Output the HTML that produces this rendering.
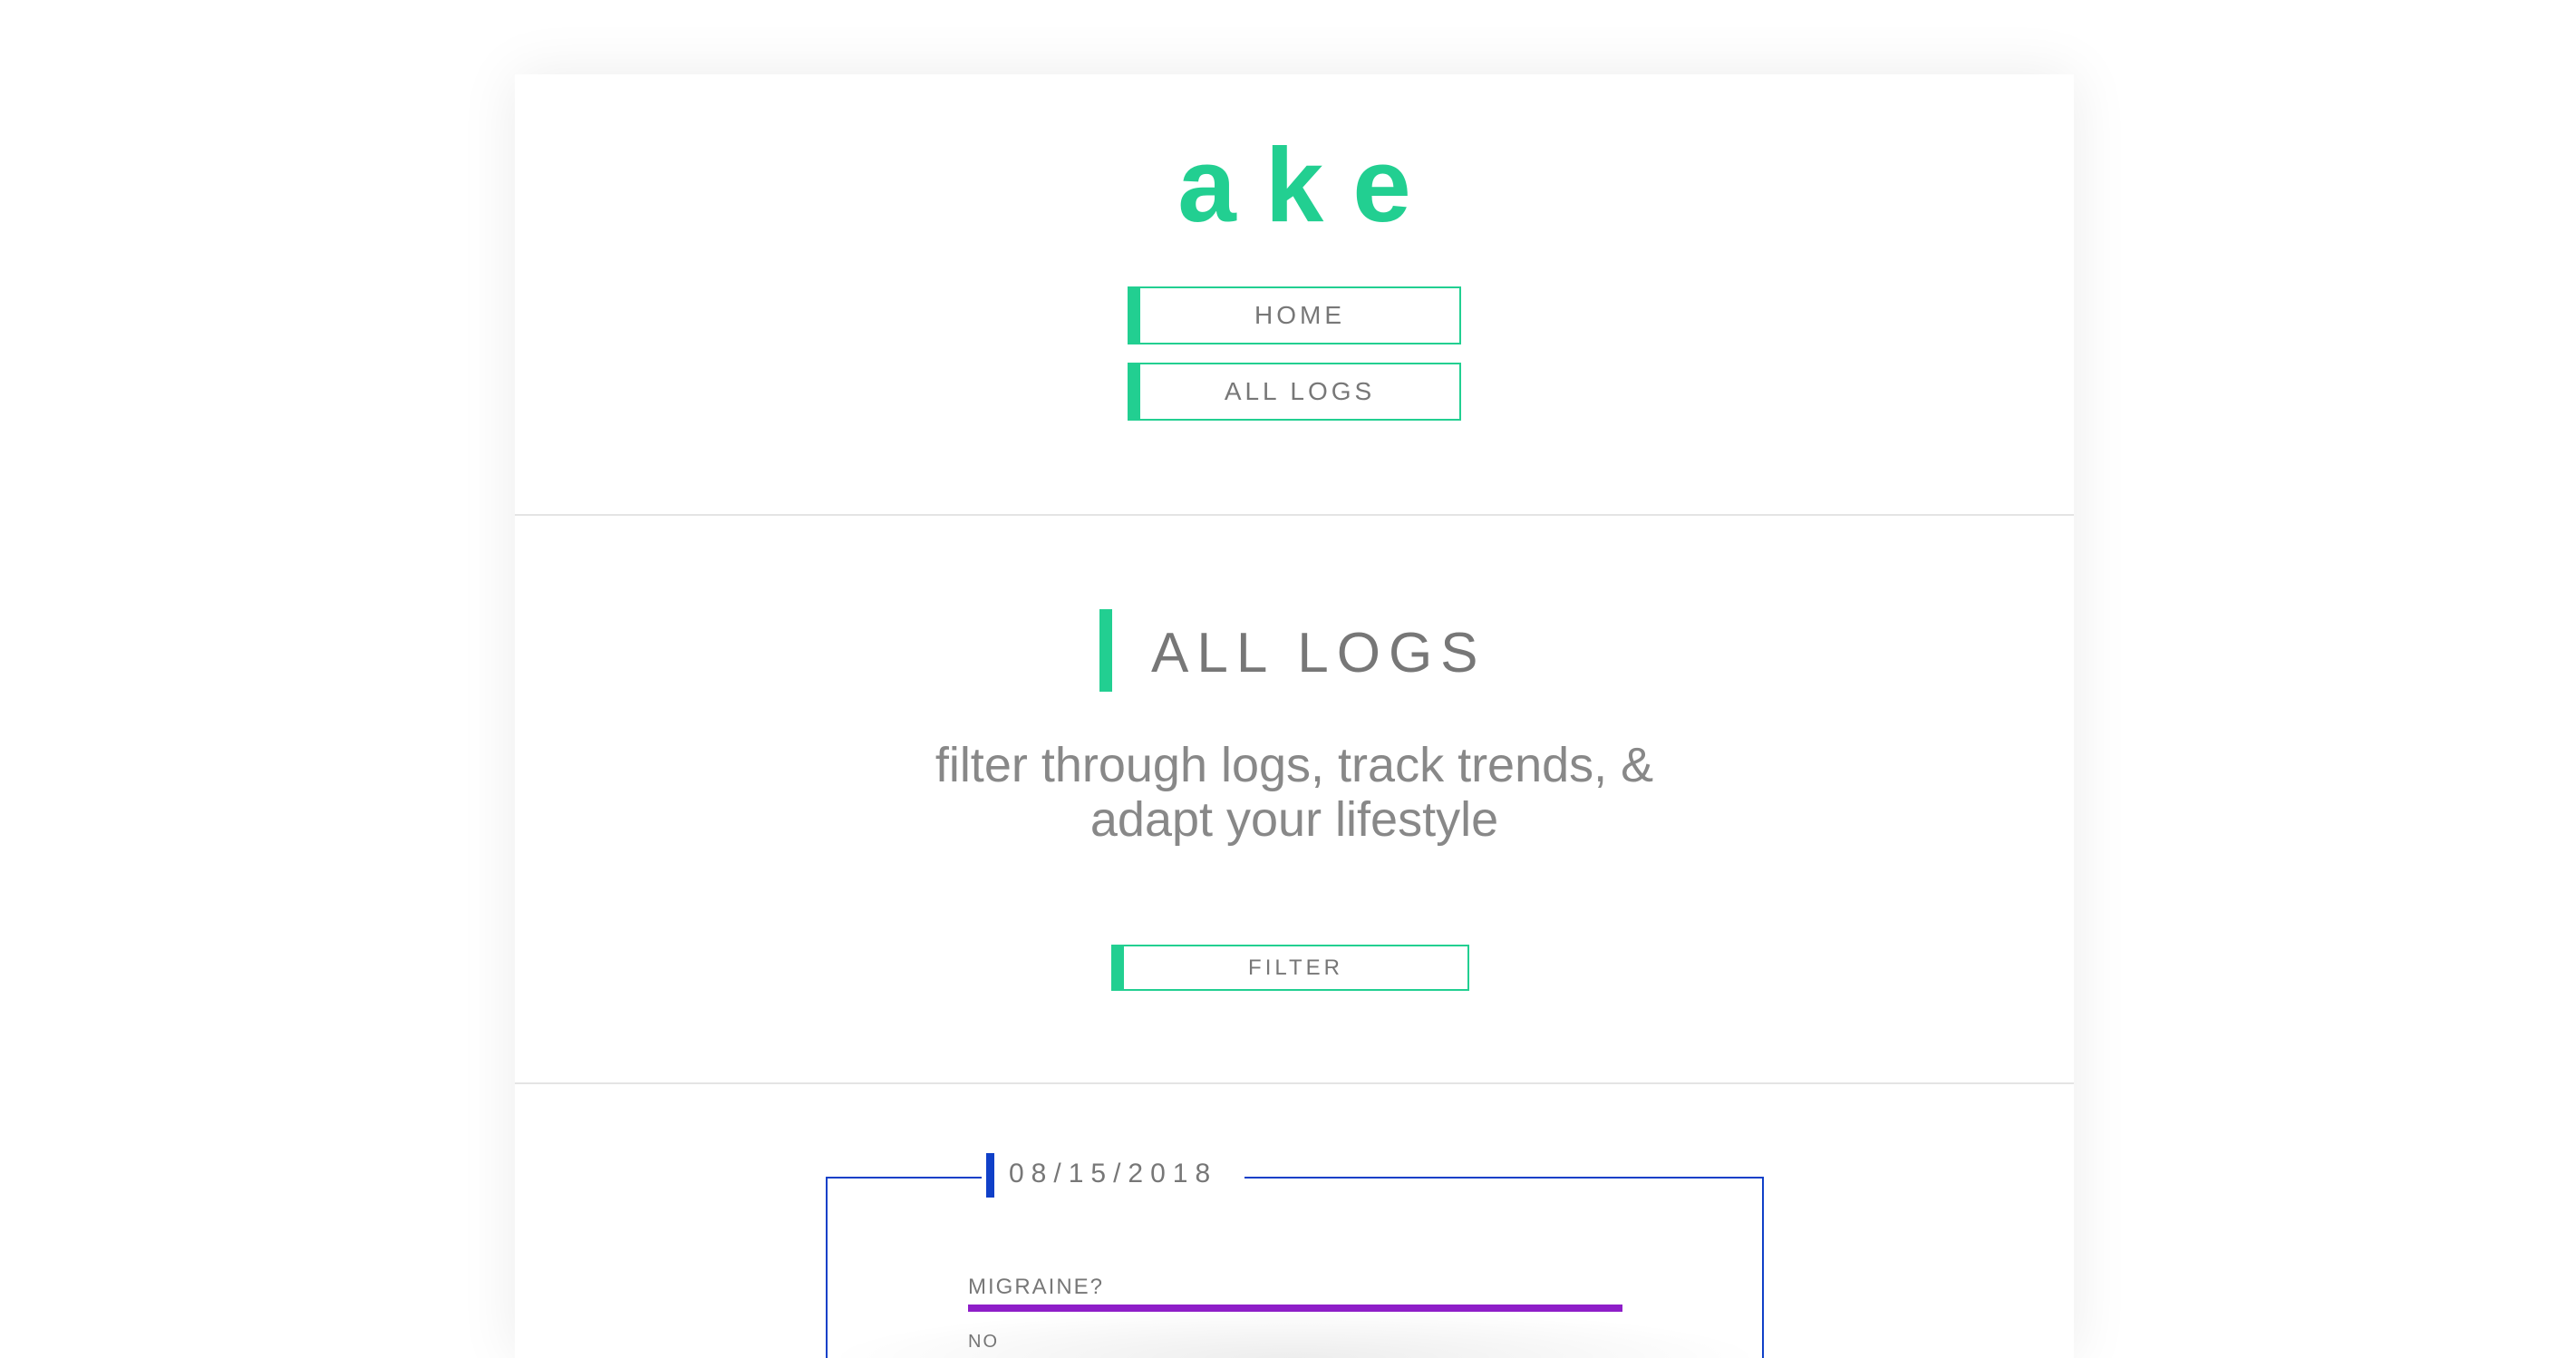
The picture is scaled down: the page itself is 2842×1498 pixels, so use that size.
<!DOCTYPE html>
<html><head><meta charset="utf-8"><style>
html,body{margin:0;padding:0;background:#fff;width:2842px;height:1498px;overflow:hidden;font-family:"Liberation Sans",sans-serif;}
.wrap{position:relative;width:2842px;height:1498px;overflow:hidden;}
.card{position:absolute;left:568px;top:82px;width:1720px;height:1416px;background:#fff;box-shadow:0 0 60px rgba(0,0,0,0.08);overflow:hidden;}
.abs{position:absolute;}
.logo{left:0;width:1720px;text-align:center;color:#22cf91;font-size:116px;font-weight:bold;letter-spacing:32px;line-height:1;padding-left:32px;box-sizing:border-box;}
.btn{position:absolute;border:2px solid #22cf91;border-left:14px solid #22cf91;box-sizing:border-box;color:#777;text-align:center;}
.hr{position:absolute;left:0;width:1720px;height:2px;background:#e4e4e4;}
</style></head><body><div class="wrap">
<div class="card">
  <div class="abs logo" style="top:64px;">ake</div>
  <div class="btn" style="left:676px;top:234px;width:368px;height:64px;line-height:60px;font-size:28px;letter-spacing:4px;">HOME</div>
  <div class="btn" style="left:676px;top:318px;width:368px;height:64px;line-height:60px;font-size:28px;letter-spacing:4px;">ALL LOGS</div>
  <div class="hr" style="top:485px;"></div>
  <div class="abs" style="left:645px;top:590px;width:14px;height:91px;background:#22cf91;"></div>
  <div class="abs" style="left:702px;top:594px;font-size:62px;letter-spacing:9px;color:#777;line-height:90px;">ALL LOGS</div>
  <div class="abs" style="left:0;width:1720px;top:732px;text-align:center;font-size:54px;line-height:60px;color:#888;">filter through logs, track trends, &amp;<br>adapt your lifestyle</div>
  <div class="btn" style="left:658px;top:960px;width:395px;height:51px;line-height:47px;font-size:24px;letter-spacing:4px;">FILTER</div>
  <div class="hr" style="top:1112px;"></div>
  <div class="abs" style="left:343px;top:1216px;width:1035px;height:200px;border:2px solid #1040c8;border-bottom:none;box-sizing:border-box;"></div>
  <div class="abs" style="left:515px;top:1205px;width:290px;height:30px;background:#fff;"></div>
  <div class="abs" style="left:520px;top:1190px;width:9px;height:49px;background:#1040c8;"></div>
  <div class="abs" style="left:545px;top:1193px;font-size:30px;letter-spacing:8px;color:#777;line-height:40px;">08/15/2018</div>
  <div class="abs" style="left:500px;top:1323px;font-size:24px;letter-spacing:2px;color:#777;line-height:30px;">MIGRAINE?</div>
  <div class="abs" style="left:500px;top:1357px;width:722px;height:8px;background:#8e1ec8;"></div>
  <div class="abs" style="left:500px;top:1385px;font-size:20px;letter-spacing:2px;color:#777;line-height:26px;">NO</div>
  <div class="abs" style="left:345px;top:1360px;width:1031px;height:56px;background:radial-gradient(ellipse 50% 100% at 50% 100%, rgba(0,0,0,0.07), rgba(0,0,0,0) 100%);"></div>
</div>
</div></body></html>
